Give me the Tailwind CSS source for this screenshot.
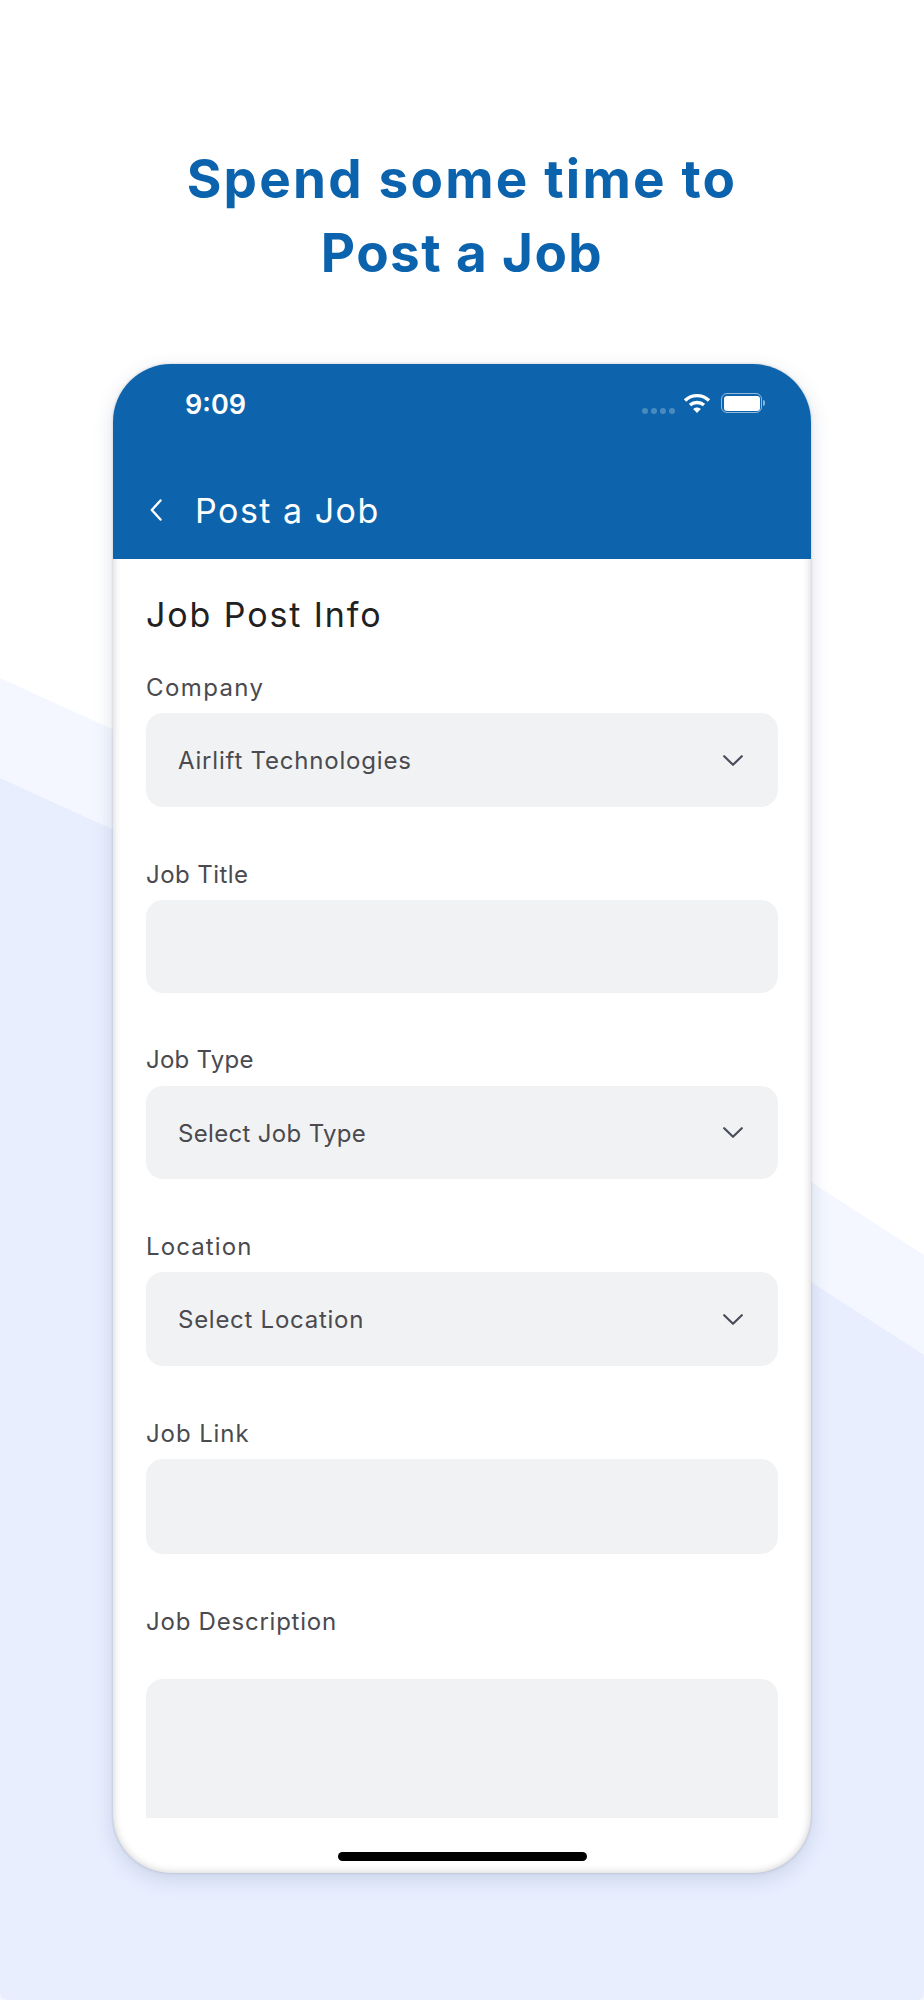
<!DOCTYPE html>
<html>
<head>
<meta charset="utf-8">
<script src="https://cdn.jsdelivr.net/npm/@tailwindcss/browser@4"></script>
</head>
<body class="bg-white">
<div class="relative w-[924px] h-[2000px] overflow-hidden font-['Inter','Noto_Sans',sans-serif]">
  <svg class="absolute inset-0" width="924" height="2000" viewBox="0 0 924 2000">
    <path d="M0 678 L114 730 L462 900 L811 1182 L924 1255 L924 2000 L0 2000 Z" fill="#f4f7ff"/>
    <path d="M0 778 L114 830 L462 1000 L811 1282 L924 1355 L924 1992 Q924 2000 916 2000 L8 2000 Q0 2000 0 1992 Z" fill="#e8eefe"/>
  </svg>
  <div class="relative flex flex-col items-center">
    <h1 class="mt-[142px] text-center text-[#0c63ad] text-[53px] leading-[74px] font-bold"><span class="tracking-[2.2px]">Spend some time to</span><br><span class="tracking-[1.4px]">Post a Job</span></h1>
    <div class="mt-[74px] w-[698px] h-[1509px] rounded-[58px] overflow-hidden bg-white shadow-[0_6px_20px_rgba(40,60,120,0.16),0_0_3px_rgba(0,0,0,0.18),inset_0_0_9px_rgba(0,0,0,0.2)] flex flex-col">
      <header class="h-[195px] shrink-0 bg-[#0d64ad] text-white flex flex-col">
        <div class="relative h-[110px] shrink-0">
          <span class="absolute left-[72px] top-[24px] text-[27px] leading-[34px] font-semibold">9:09</span>
          <div class="absolute left-[529px] top-[44px] flex gap-[3.6px]">
            <i class="block w-[5.5px] h-[5.5px] rounded-full bg-white/25"></i>
            <i class="block w-[5.5px] h-[5.5px] rounded-full bg-white/25"></i>
            <i class="block w-[5.5px] h-[5.5px] rounded-full bg-white/25"></i>
            <i class="block w-[5.5px] h-[5.5px] rounded-full bg-white/25"></i>
          </div>
          <svg class="absolute left-[570px] top-[29px]" width="28" height="21" viewBox="0 0 28 21" fill="none" stroke="#fff" stroke-width="3.4">
            <path d="M2 7.5 C9 1 19 1 26 7.5"/>
            <path d="M7 12 C11 8.6 17 8.6 21 12"/>
            <path d="M10.2 16 L14 20 L17.8 16 C15.5 14 12.5 14 10.2 16 Z" fill="#fff" stroke="none"/>
          </svg>
          <div class="absolute left-[608px] top-[29px] w-[41px] h-[20px] rounded-[6px] border-[1.5px] border-white/55 p-[1.5px]">
            <div class="w-full h-full rounded-[3px] bg-white"></div>
          </div>
          <div class="absolute left-[650px] top-[36px] w-[2px] h-[6px] rounded-r-full bg-white/50"></div>
        </div>
        <div class="flex items-center h-[72px] pl-[37px]">
          <svg width="12" height="22" viewBox="0 0 12 22" fill="none" stroke="#fff" stroke-width="2.4" stroke-linecap="round" stroke-linejoin="round"><path d="M10.5 1.5 L1.8 11 L10.5 20.5"/></svg>
          <span class="ml-[33px] pt-[2px] text-[34px] leading-[40px] tracking-[1.5px]">Post a Job</span>
        </div>
      </header>
      <main class="flex-1 px-[33px] pt-[34px] flex flex-col">
        <h2 class="text-[34px] leading-[44px] text-[#212121] tracking-[1.9px]">Job Post Info</h2>

        <label class="mt-[36px] text-[24px] leading-[30px] text-[#4a4a4f] tracking-[1.4px]">Company</label>
        <div class="mt-[10px] h-[94px] rounded-[17px] bg-[#f1f2f4] flex items-center justify-between pl-[32px] pr-[35px] text-[24px] text-[#4a4a4f]">
          <span class="pt-[2px] tracking-[0.8px]">Airlift Technologies</span>
          <svg width="20" height="11" viewBox="0 0 20 11" fill="none" stroke="#4a4d5a" stroke-width="2.2" stroke-linecap="round" stroke-linejoin="round"><path d="M1.2 1.2 L10 9.8 L18.8 1.2"/></svg>
        </div>

        <label class="mt-[53px] text-[24px] leading-[30px] text-[#4a4a4f] tracking-[0.45px]">Job Title</label>
        <div class="mt-[10px] h-[93px] rounded-[17px] bg-[#f1f2f4]"></div>

        <label class="mt-[52px] text-[24px] leading-[30px] text-[#4a4a4f] tracking-[0.25px]">Job Type</label>
        <div class="mt-[11px] h-[93px] rounded-[17px] bg-[#f1f2f4] flex items-center justify-between pl-[32px] pr-[35px] text-[24px] text-[#4a4a4f]">
          <span class="pt-[2px] tracking-[0.33px]">Select Job Type</span>
          <svg width="20" height="11" viewBox="0 0 20 11" fill="none" stroke="#4a4d5a" stroke-width="2.2" stroke-linecap="round" stroke-linejoin="round"><path d="M1.2 1.2 L10 9.8 L18.8 1.2"/></svg>
        </div>

        <label class="mt-[53px] text-[24px] leading-[30px] text-[#4a4a4f] tracking-[1.1px]">Location</label>
        <div class="mt-[10px] h-[94px] rounded-[17px] bg-[#f1f2f4] flex items-center justify-between pl-[32px] pr-[35px] text-[24px] text-[#4a4a4f]">
          <span class="pt-[2px] tracking-[0.73px]">Select Location</span>
          <svg width="20" height="11" viewBox="0 0 20 11" fill="none" stroke="#4a4d5a" stroke-width="2.2" stroke-linecap="round" stroke-linejoin="round"><path d="M1.2 1.2 L10 9.8 L18.8 1.2"/></svg>
        </div>

        <label class="mt-[53px] text-[24px] leading-[30px] text-[#4a4a4f] tracking-[0.9px]">Job Link</label>
        <div class="mt-[10px] h-[95px] rounded-[17px] bg-[#f1f2f4]"></div>

        <label class="mt-[53px] text-[24px] leading-[30px] text-[#4a4a4f] tracking-[0.77px]">Job Description</label>
        <div class="mt-[42px] h-[139px] rounded-t-[17px] bg-[#f1f2f4]"></div>

        <div class="mt-[34px] mx-auto w-[249px] h-[9px] rounded-full bg-black"></div>
      </main>
    </div>
  </div>
</div>
</body>
</html>
